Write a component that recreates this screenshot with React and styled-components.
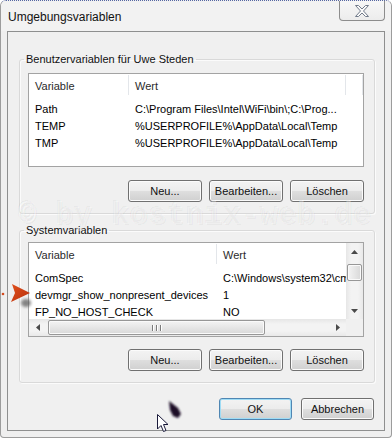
import styled, { createGlobalStyle } from "styled-components";

const GlobalStyle = createGlobalStyle`
    html, body {
        margin: 0;
        padding: 0;
        background: #ffffff;
    }
    body {
        font-family: "Liberation Sans", Arial, sans-serif;
        font-size: 11px;
        color: #000;
    }
`;

const Window = styled.div`
    position: relative;
    width: 392px;
    height: 438px;
    box-sizing: border-box;
    background: #efefef;
    border: 1px solid #9c9c9c;
    border-top: 1px dotted #5566a2;
    border-radius: 6px 6px 4px 4px;
    overflow: hidden;
`;

const TitleBar = styled.div`
    height: 30px;
    display: flex;
    justify-content: space-between;
    align-items: flex-start;
    padding: 0 6px 0 7px;
    background: #f2f2f2;
`;

const Caption = styled.div`
    font-size: 12px;
    line-height: 14px;
    padding-top: 9px;
    color: #111;
`;

const CloseButton = styled.div`
    width: 46px;
    height: 20px;
    box-sizing: border-box;
    border: 1px solid #8d8d8d;
    border-top: none;
    border-radius: 0 0 4px 4px;
    background: linear-gradient(#f7f7f7, #ececec);
    display: flex;
    align-items: center;
    justify-content: center;
`;

const Client = styled.div`
    margin: 0 6px;
    height: 400px;
    box-sizing: border-box;
    border: 1px solid #8e8f8f;
    background: #f0f0f0;
    padding-top: 20px;
`;

const Group = styled.fieldset`
    margin: 0 9px ${({ $gap }) => $gap}px 11px;
    padding: ${({ $top }) => $top}px 10px 11px 8px;
    border: 1px solid #d9d9d9;
    border-radius: 3px;
    box-shadow: inset 1px 1px 0 #fbfbfb, 1px 1px 0 #fbfbfb;
`;

const Legend = styled.legend`
    margin-left: -4px;
    padding: 0 2px;
    font-size: 11px;
    line-height: 14px;
    color: #111;
`;

const ListBox = styled.div`
    width: 336px;
    height: ${({ $h }) => $h}px;
    box-sizing: border-box;
    border: 1px solid #a3a3a3;
    background: #fff;
    display: grid;
    grid-template-columns: ${({ $scroll }) => ($scroll ? "1fr 17px" : "1fr")};
    grid-template-rows: ${({ $scroll }) => ($scroll ? "1fr 17px" : "1fr")};
    overflow: hidden;
`;

const Viewport = styled.div`
    overflow: hidden;
    min-width: 0;
`;

const Header = styled.div`
    display: flex;
    height: 24px;
    margin-bottom: 2px;
    white-space: nowrap;
`;

const HeaderCell = styled.div`
    position: relative;
    flex: 0 0 ${({ $w }) => $w}px;
    box-sizing: border-box;
    padding-left: 6px;
    line-height: 24px;
    color: #2b2b2b;

    &::after {
        content: "";
        position: absolute;
        right: 0;
        top: 1px;
        bottom: 3px;
        width: 1px;
        background: #e3e6ea;
    }
`;

const Row = styled.div`
    display: flex;
    height: 17px;
    align-items: center;
    white-space: nowrap;
`;

const Cell = styled.div`
    flex: 0 0 ${({ $w }) => $w}px;
    box-sizing: border-box;
    padding-left: 6px;
    overflow: hidden;
`;

const VScroll = styled.div`
    display: flex;
    flex-direction: column;
    background: linear-gradient(90deg, #e6e6e6, #f3f3f3 30%, #f3f3f3 70%, #e9e9e9);
`;

const HScroll = styled.div`
    display: flex;
    align-items: stretch;
    background: linear-gradient(#e6e6e6, #f3f3f3 30%, #f3f3f3 70%, #e9e9e9);
`;

const ArrowBox = styled.div`
    flex: 0 0 17px;
    display: flex;
    align-items: center;
    justify-content: center;
`;

const Spacer = styled.div`
    flex: 1;
`;

const VThumb = styled.div`
    margin: 4px 1px 0 1px;
    height: 15px;
    border: 1px solid #979797;
    border-radius: 2px;
    background: linear-gradient(90deg, #f4f4f4, #e6e6e6 50%, #d8d8d8);
    box-shadow: inset 0 0 0 1px #fafafa;
`;

const HThumb = styled.div`
    margin: 1px 0 1px 2px;
    width: 217px;
    box-sizing: border-box;
    border: 1px solid #979797;
    border-radius: 2px;
    background: linear-gradient(#f4f4f4, #e6e6e6 50%, #d8d8d8);
    box-shadow: inset 0 0 0 1px #fafafa;
    display: flex;
    align-items: center;
    justify-content: center;
    gap: 1px;
`;

const Grip = styled.span`
    width: 1px;
    height: 6px;
    background: #7b7b7b;
    box-shadow: 1px 0 0 #ffffff;
    margin: 0 1px;
`;

const Corner = styled.div`
    background: #f0f0f0;
`;

const ButtonRow = styled.div`
    display: flex;
    justify-content: flex-end;
    gap: 7px;
    width: 336px;
    margin-top: ${({ $top }) => $top}px;
`;

const Button = styled.button`
    width: ${({ $w }) => $w || 74}px;
    height: 22px;
    padding: 0;
    font-family: "Liberation Sans", Arial, sans-serif;
    font-size: 11px;
    color: #111;
    border: 1px solid ${({ $default }) => ($default ? "#4f86b3" : "#707070")};
    border-radius: 3px;
    background: linear-gradient(#f3f3f3 0%, #ececec 48%, #dedede 52%, #d0d0d0 100%);
    box-shadow: inset 0 0 0 1px ${({ $default }) => ($default ? "#9fdcf5" : "#fbfbfb")};
`;

const Footer = styled.div`
    display: flex;
    justify-content: flex-end;
    gap: 9px;
    margin: 15px 10px 0 0;
`;

const Watermark = styled.div`
    position: absolute;
    left: 17px;
    top: 199px;
    font-family: "Liberation Mono", "Courier New", monospace;
    font-weight: bold;
    font-size: 31px;
    line-height: 31px;
    white-space: nowrap;
    color: rgba(255, 255, 255, 0.35);
    text-shadow: 1px 1px 0 rgba(0, 0, 0, 0.035), -1px -1px 0 rgba(0, 0, 0, 0.03);
    pointer-events: none;
`;

const Overlay = styled.svg`
    position: absolute;
    left: ${({ $x }) => $x}px;
    top: ${({ $y }) => $y}px;
    overflow: visible;
    pointer-events: none;
`;

const Arrow = ({ dir }) => {
    const pts = {
        up: "0,4 3.5,0 7,4",
        down: "0,0 3.5,4 7,0",
        left: "4,0 0,3.5 4,7",
        right: "0,0 4,3.5 0,7",
    }[dir];
    const vertical = dir === "up" || dir === "down";
    return (
        <ArrowBox>
            <svg width={vertical ? 7 : 4} height={vertical ? 4 : 7}>
                <polygon points={pts} fill="#4a4a4a" />
            </svg>
        </ArrowBox>
    );
};

const ListView = ({ height, columns, rows, scroll }) => (
    <ListBox $h={height} $scroll={scroll}>
        <Viewport>
            <Header>
                {columns.map((c) => (
                    <HeaderCell key={c.title + c.w} $w={c.w}>{c.title}</HeaderCell>
                ))}
            </Header>
            {rows.map((r) => (
                <Row key={r[0]}>
                    {r.map((text, i) => (
                        <Cell key={i} $w={columns[i].w}>{text}</Cell>
                    ))}
                </Row>
            ))}
        </Viewport>
        {scroll && (
            <>
                <VScroll>
                    <Arrow dir="up" />
                    <VThumb />
                    <Spacer />
                    <Arrow dir="down" />
                </VScroll>
                <HScroll>
                    <Arrow dir="left" />
                    <HThumb>
                        <Grip />
                        <Grip />
                        <Grip />
                    </HThumb>
                    <Spacer />
                    <Arrow dir="right" />
                </HScroll>
                <Corner />
            </>
        )}
    </ListBox>
);

const userColumns = [
    { title: "Variable", w: 100 },
    { title: "Wert", w: 217 },
    { title: "", w: 17 },
];

const userRows = [
    ["Path", "C:\\Program Files\\Intel\\WiFi\\bin\\;C:\\Prog..."],
    ["TEMP", "%USERPROFILE%\\AppData\\Local\\Temp"],
    ["TMP", "%USERPROFILE%\\AppData\\Local\\Temp"],
];

const systemColumns = [
    { title: "Variable", w: 188 },
    { title: "Wert", w: 200 },
];

const systemRows = [
    ["ComSpec", "C:\\Windows\\system32\\cmd.exe"],
    ["devmgr_show_nonpresent_devices", "1"],
    ["FP_NO_HOST_CHECK", "NO"],
];

const ButtonBar = ({ top }) => (
    <ButtonRow $top={top}>
        <Button>Neu...</Button>
        <Button>Bearbeiten...</Button>
        <Button>Löschen</Button>
    </ButtonRow>
);

export default function App() {
    return (
        <>
            <GlobalStyle />
            <Window>
                <TitleBar>
                    <Caption>Umgebungsvariablen</Caption>
                    <CloseButton>
                        <svg width="14" height="12" viewBox="0 0 14 12">
                            <polygon
                                points="0.5,0.5 3.5,0.5 7,4 10.5,0.5 13.5,0.5 8.5,6 13.5,11.5 10.5,11.5 7,8 3.5,11.5 0.5,11.5 5.5,6"
                                fill="#fafafa"
                                stroke="#717a8a"
                                strokeWidth="1"
                            />
                        </svg>
                    </CloseButton>
                </TitleBar>
                <Client>
                    <Group $top={7} $gap={9}>
                        <Legend>Benutzervariablen für Uwe Steden</Legend>
                        <ListView height={94} columns={userColumns} rows={userRows} />
                        <ButtonBar top={13} />
                    </Group>
                    <Group $top={5} $gap={0}>
                        <Legend>Systemvariablen</Legend>
                        <ListView height={95} columns={systemColumns} rows={systemRows} scroll />
                        <ButtonBar top={12} />
                    </Group>
                    <Footer>
                        <Button $w={73} $default>OK</Button>
                        <Button $w={73}>Abbrechen</Button>
                    </Footer>
                </Client>
                <Watermark>© by kostnix-web.de</Watermark>
                <Overlay $x={0} $y={281} width="34" height="28">
                    <defs>
                        <filter id="blurShadow" x="-50%" y="-50%" width="200%" height="200%">
                            <feGaussianBlur stdDeviation="1.6" />
                        </filter>
                        <linearGradient id="redArrow" x1="0" y1="0" x2="1" y2="1">
                            <stop offset="0" stopColor="#e0501c" />
                            <stop offset="1" stopColor="#b8300e" />
                        </linearGradient>
                    </defs>
                    <ellipse cx="25" cy="21" rx="5" ry="4" fill="#555" opacity="0.7" filter="url(#blurShadow)" />
                    <circle cx="2" cy="12" r="1.3" fill="#d24a1e" />
                    <polygon points="11,2 29,11 10,20 14,11" fill="url(#redArrow)" />
                </Overlay>
                <Overlay $x={165} $y={398} width="18" height="22">
                    <defs>
                        <filter id="blurBlob" x="-50%" y="-50%" width="200%" height="200%">
                            <feGaussianBlur stdDeviation="1" />
                        </filter>
                    </defs>
                    <path d="M3,2 L12,9 L15,15 L12,19 L7,17 L4,11 Z" fill="#1c0d28" filter="url(#blurBlob)" />
                </Overlay>
                <Overlay $x={156} $y={413} width="13" height="20">
                    <path
                        d="M0.5,0.5 L0.5,15 L4,11.5 L6.5,17.5 L9,16.5 L6.5,10.5 L11,10.5 Z"
                        fill="#ffffff"
                        stroke="#1a1a3a"
                        strokeWidth="1"
                        strokeLinejoin="round"
                    />
                </Overlay>
            </Window>
        </>
    );
}
